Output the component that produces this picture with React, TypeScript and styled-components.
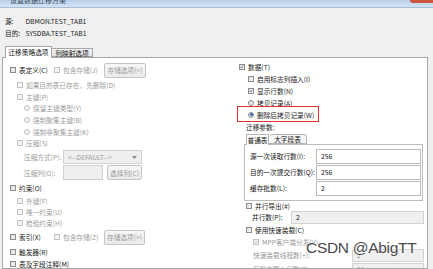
import React from 'react';
import styled, { createGlobalStyle } from 'styled-components';

const GlobalStyle = createGlobalStyle`
  html, body { margin: 0; padding: 0; background: #f0f0f0; }
  body { font-family: "Noto Sans CJK SC", "Liberation Sans", sans-serif; }
`;

const Window = styled.div`
  width: 433px;
  height: 269px;
  overflow: hidden;
  position: relative;
  background: #f0f0f0;
  font-size: 6.7px;
  color: #202020;
  display: flex;
  flex-direction: column;
`;

const TitleBar = styled.div`
  height: 7px;
  flex: none;
  background: linear-gradient(#b7cfe9, #d6e5f4);
  border-bottom: 1px solid #a7bdd5;
  display: flex;
  align-items: flex-start;
  overflow: hidden;
`;

const TitleText = styled.span`
  margin: -4px 0 0 10px;
  font-size: 7px;
  line-height: 8px;
  color: #3a4a5a;
`;

const CloseBtn = styled.span`
  margin-left: auto;
  width: 23px;
  height: 3px;
  background: #c9553f;
  border-radius: 0 0 0 3px;
`;

const Info = styled.div`
  padding: 7px 0 0 5px;
`;

const InfoRow = styled.div`
  height: 12px;
  display: flex;
  align-items: center;
`;

const InfoLabel = styled.span`
  width: 20.5px;
`;

const Tabs = styled.div`
  margin: 7px 0 0 5px;
  height: 11px;
  display: flex;
  align-items: flex-end;
  position: relative;
  z-index: 1;
`;

const Tab = styled.div<{ $active?: boolean; $w: number }>`
  width: ${p => p.$w}px;
  height: ${p => (p.$active ? 12 : 9)}px;
  margin-bottom: ${p => (p.$active ? -1 : 0)}px;
  box-sizing: border-box;
  border: 1px solid #a8a8a8;
  border-bottom: ${p => (p.$active ? 'none' : '1px solid #a8a8a8')};
  border-left: ${p => (p.$active ? '1px solid #a8a8a8' : 'none')};
  background: ${p => (p.$active ? '#fff' : 'linear-gradient(#f2f2f2, #e2e2e2)')};
  display: flex;
  align-items: center;
  justify-content: center;
  padding-bottom: ${p => (p.$active ? 1 : 0)}px;
`;

const Panel = styled.div`
  margin-left: 2px;
  width: 426px;
  flex: 1;
  box-sizing: border-box;
  border: 1px solid #a8a8a8;
  background: #fff;
  display: grid;
  grid-template-columns: 228px 1fr;
  overflow: hidden;
`;

const Column = styled.div<{ $top: number }>`
  padding-top: ${p => p.$top}px;
  display: flex;
  flex-direction: column;
`;

const Row = styled.div<{ $h: number; $indent: number; $muted?: boolean }>`
  height: ${p => p.$h}px;
  flex: none;
  padding-left: ${p => p.$indent}px;
  display: flex;
  align-items: center;
  white-space: nowrap;
  position: relative;
  color: ${p => (p.$muted ? '#9b9b9b' : '#202020')};
`;

const Item = styled.span<{ $w?: number; $muted?: boolean }>`
  display: flex;
  align-items: center;
  width: ${p => (p.$w ? `${p.$w}px` : 'auto')};
  flex: none;
  color: ${p => (p.$muted ? '#9b9b9b' : 'inherit')};
`;

const Box = styled.span<{ $off?: boolean; $round?: boolean }>`
  width: 6px;
  height: 6px;
  flex: none;
  box-sizing: border-box;
  margin-right: 3px;
  border: 1px solid ${p => (p.$off ? '#c2c2c2' : '#8c8c8c')};
  border-radius: ${p => (p.$round ? '50%' : '0')};
  background: ${p => (p.$off ? '#f4f4f4' : 'linear-gradient(135deg, #d9d9d9, #fbfbfb)')};
  display: flex;
  align-items: center;
  justify-content: center;
  overflow: visible;
`;

const Dot = styled.span`
  width: 3px;
  height: 3px;
  border-radius: 50%;
  background: #2f63b5;
`;

const Button = styled.span<{ $w: number; $h: number }>`
  width: ${p => p.$w}px;
  height: ${p => p.$h}px;
  flex: none;
  box-sizing: border-box;
  border: 1px solid #c4c4c4;
  border-radius: 2px;
  background: linear-gradient(#f6f6f6, #ebebeb);
  color: #9b9b9b;
  display: flex;
  align-items: center;
  justify-content: center;
`;

const Field = styled.span<{ $w: number; $h: number; $off?: boolean; $muted?: boolean }>`
  width: ${p => p.$w}px;
  height: ${p => p.$h}px;
  flex: none;
  box-sizing: border-box;
  border: 1px solid ${p => (p.$off ? '#d2d2d2' : '#b7b9bf')};
  background: ${p => (p.$off ? '#efefef' : '#fff')};
  color: ${p => (p.$muted ? '#9b9b9b' : '#202020')};
  display: flex;
  align-items: center;
  padding-left: 4px;
`;

const Arrow = styled.svg`
  margin-left: auto;
  margin-right: 4px;
`;

const Label = styled.span<{ $w: number }>`
  width: ${p => p.$w}px;
  flex: none;
`;

const Highlight = styled.span`
  position: absolute;
  left: 6px;
  top: -3px;
  width: 82px;
  height: 16px;
  box-sizing: border-box;
  border: 1.5px solid #e2332e;
`;

const SubTabs = styled.div`
  height: 11px;
  margin-left: 15px;
  display: flex;
  align-items: flex-end;
  position: relative;
  z-index: 1;
`;

const SubTab = styled.div<{ $active?: boolean; $w: number }>`
  width: ${p => p.$w}px;
  height: ${p => (p.$active ? 11 : 10)}px;
  margin-bottom: ${p => (p.$active ? -1 : 0)}px;
  box-sizing: border-box;
  border: 1px solid #b5b5b5;
  border-bottom: ${p => (p.$active ? 'none' : '1px solid #b5b5b5')};
  border-left: ${p => (p.$active ? '1px solid #b5b5b5' : 'none')};
  border-radius: ${p => (p.$active ? '0' : '4px 3px 0 0')};
  background: ${p => (p.$active ? '#fff' : '#f7f7f7')};
  display: flex;
  align-items: center;
  justify-content: center;
`;

const SubPanel = styled.div`
  margin: 0 4px 0 13px;
  box-sizing: border-box;
  border: 1px solid #bdbdbd;
  padding: 3px 1px 4px 5px;
  display: flex;
  flex-direction: column;
`;

const ParamRow = styled.div`
  height: 16px;
  display: grid;
  grid-template-columns: 66px 1fr;
  align-items: center;
`;

const Watermark = styled.span`
  position: absolute;
  left: 306px;
  top: 240px;
  font-family: "Liberation Sans", sans-serif;
  font-size: 15.5px;
  line-height: 16px;
  letter-spacing: -0.3px;
  color: #4a4a4a;
  text-shadow: 0 0 2px #fff, 0 0 1px #fff;
  white-space: nowrap;
`;

const Check: React.FC<{ checked?: boolean; off?: boolean; round?: boolean }> = ({ checked, off, round }) => (
  <Box $off={off} $round={round}>
    {checked && !round && (
      <svg width="6" height="6" viewBox="0 0 6 6">
        <path d="M1 3.2 L2.4 4.6 L5 1.2" fill="none" stroke={off ? '#9aa7bd' : '#2b4b8e'} strokeWidth="1.1" />
      </svg>
    )}
    {checked && round && <Dot />}
  </Box>
);

const Opt: React.FC<{ label: string; checked?: boolean; off?: boolean; round?: boolean; w?: number; muted?: boolean }> = ({ label, checked, off, round, w, muted }) => (
  <Item $w={w} $muted={muted}>
    <Check checked={checked} off={off} round={round} />
    {label}
  </Item>
);

const App: React.FC = () => {
  return (
    <>
      <GlobalStyle />
      <Window>
        <TitleBar>
          <TitleText>设置数据迁移方案</TitleText>
          <CloseBtn />
        </TitleBar>
        <Info>
          <InfoRow><InfoLabel>源:</InfoLabel>DBMON.TEST_TAB1</InfoRow>
          <InfoRow><InfoLabel>目的:</InfoLabel>SYSDBA.TEST_TAB1</InfoRow>
        </Info>
        <Tabs>
          <Tab $active $w={47}>迁移策略选项</Tab>
          <Tab $w={41}>列映射选项</Tab>
        </Tabs>
        <Panel>
          <Column $top={4}>
            <Row $h={16} $indent={7}>
              <Opt w={44} label="表定义(C)" />
              <Opt w={50} label="包含存储(J)" off muted />
              <Button $w={42} $h={15}>存储选项(&lt;)</Button>
            </Row>
            <Row $h={13} $indent={14} $muted><Opt label="如果目的表已存在，先删除(D)" off /></Row>
            <Row $h={11} $indent={14} $muted><Opt label="主键(P)" off /></Row>
            <Row $h={12} $indent={21} $muted><Opt label="保留主键类型(Y)" round off /></Row>
            <Row $h={12} $indent={21} $muted><Opt label="强制聚集主键(B)" round off /></Row>
            <Row $h={11} $indent={21} $muted><Opt label="强制非聚集主键(K)" round off /></Row>
            <Row $h={12} $indent={14} $muted><Opt label="压缩(S)" off /></Row>
            <Row $h={16} $indent={21} $muted>
              <Label $w={39}>压缩方式(P):</Label>
              <Field $w={79} $h={14} $off $muted>
                &lt;--DEFAULT--&gt;
                <Arrow width="5" height="3" viewBox="0 0 5 3"><path d="M0 0 L5 0 L2.5 3 Z" fill="#8a8a8a" /></Arrow>
              </Field>
            </Row>
            <Row $h={15} $indent={21} $muted>
              <Label $w={39}>压缩列(O):</Label>
              <Field $w={40} $h={15} $off />
              <Item $w={4} />
              <Button $w={35} $h={15}>选择列(C)</Button>
            </Row>
            <Row $h={16} $indent={7}><Opt label="约束(O)" /></Row>
            <Row $h={10} $indent={14} $muted><Opt label="外键(F)" off /></Row>
            <Row $h={11} $indent={14} $muted><Opt label="唯一约束(U)" off /></Row>
            <Row $h={11} $indent={14} $muted><Opt label="检验约束(H)" off /></Row>
            <Row $h={18} $indent={7}>
              <Opt w={44} label="索引(X)" />
              <Opt w={50} label="包含存储(Z)" off muted />
              <Button $w={41} $h={15}>存储选项(&gt;)</Button>
            </Row>
            <Row $h={12} $indent={7}><Opt label="触发器(R)" /></Row>
            <Row $h={12} $indent={7}><Opt label="表及字段注释(M)" /></Row>
          </Column>
          <Column $top={3}>
            <Row $h={12} $indent={8}><Opt label="数据(T)" checked /></Row>
            <Row $h={12} $indent={17}><Opt label="启用标志列插入(I)" /></Row>
            <Row $h={12} $indent={17}><Opt label="显示行数(N)" checked /></Row>
            <Row $h={12} $indent={17}><Opt label="拷贝记录(A)" round /></Row>
            <Row $h={11} $indent={17}>
              <Opt label="删除后拷贝记录(W)" round checked />
              <Highlight />
            </Row>
            <Row $h={13} $indent={15}>迁移参数:</Row>
            <SubTabs>
              <SubTab $active $w={23}>普通表</SubTab>
              <SubTab $w={38}>大字段表</SubTab>
            </SubTabs>
            <SubPanel>
              <ParamRow><span>源一次读取行数(I):</span><Field $w={105} $h={15}>256</Field></ParamRow>
              <ParamRow><span>目的一次提交行数(Q):</span><Field $w={105} $h={15}>256</Field></ParamRow>
              <ParamRow><span>缓存批数(L):</span><Field $w={105} $h={15}>2</Field></ParamRow>
            </SubPanel>
            <Row $h={9} $indent={15}><Opt label="并行导出(#)" /></Row>
            <Row $h={14} $indent={21}>
              <Label $w={39}>并行数(P):</Label>
              <Field $w={133} $h={13} $off>2</Field>
            </Row>
            <Row $h={12} $indent={15}><Opt label="使用快速装载(C)" /></Row>
            <Row $h={12} $indent={22} $muted><Opt label="MPP客户端分发(V)" checked off /></Row>
            <Row $h={14} $indent={22} $muted>
              <Label $w={99}>快速装载线程数(+):</Label>
              <Field $w={72} $h={13} $off $muted>2</Field>
            </Row>
            <Row $h={14} $indent={22} $muted>
              <Label $w={99}>每批次导入行数(B):</Label>
              <Field $w={72} $h={13} $off $muted>50</Field>
            </Row>
          </Column>
        </Panel>
        <Watermark>CSDN @AbigTT</Watermark>
      </Window>
    </>
  );
};

export default App;
